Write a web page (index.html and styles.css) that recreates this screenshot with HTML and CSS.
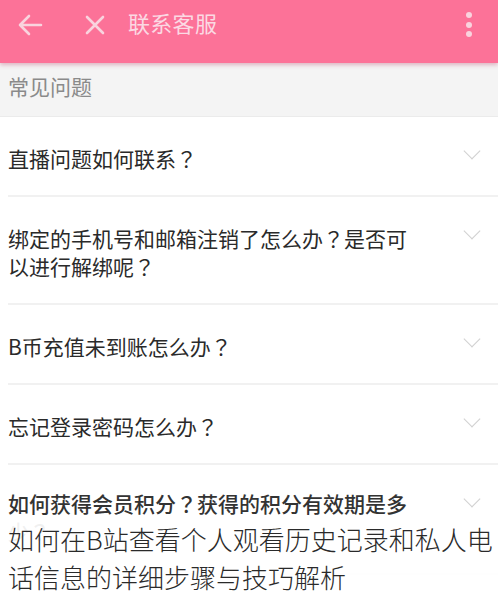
FILE: index.html
```html
<!DOCTYPE html>
<html lang="zh-CN">
<head>
<meta charset="utf-8">
<title>联系客服</title>
<link rel="stylesheet" href="styles.css">
</head>
<body>
<div class="page">
  <header class="topbar">
    <svg class="icon back" width="26" height="22" viewBox="0 0 26 22"><path d="M24 11H3M12 2L3 11l9 9" fill="none" stroke="#f9d3de" stroke-width="2.6" stroke-linecap="round" stroke-linejoin="round"/></svg>
    <svg class="icon close" width="20" height="20" viewBox="0 0 20 20"><path d="M2 2l16 16M18 2L2 18" fill="none" stroke="#f9d3de" stroke-width="2.6" stroke-linecap="round"/></svg>
    <span class="title">联系客服</span>
    <span class="more"><i></i><i></i><i></i></span>
  </header>
  <div class="section">常见问题</div>
  <ul class="faq">
    <li class="item"><span class="q">直播问题如何联系<span class="qm" lang="zh-TW">？</span></span><span class="chev"></span></li>
    <li class="item tall"><span class="q">绑定的手机号和邮箱注销了怎么办<span class="qm" lang="zh-TW">？</span>是否可以进行解绑呢<span class="qm" lang="zh-TW">？</span></span><span class="chev"></span></li>
    <li class="item"><span class="q">B币充值未到账怎么办<span class="qm" lang="zh-TW">？</span></span><span class="chev"></span></li>
    <li class="item"><span class="q">忘记登录密码怎么办<span class="qm" lang="zh-TW">？</span></span><span class="chev"></span></li>
    <li class="item last"><span class="q strong">如何获得会员积分<span class="qm" lang="zh-TW">？</span>获得的积分有效期是多少<span class="qm" lang="zh-TW">？</span></span><span class="chev"></span></li>
  </ul>
  <div class="caption">如何在B站查看个人观看历史记录和私人电<br>话信息的详细步骤与技巧解析</div>
</div>
</body>
</html>
```
FILE: styles.css
```css
html, body {
  margin: 0;
  padding: 0;
  background: #fff;
}
body {
  font-family: "Noto Sans CJK SC", "Noto Sans", sans-serif;
  color: #222;
}
.page {
  position: relative;
  width: 498px;
  height: 595px;
  overflow: hidden;
  background: #fff;
}
.topbar {
  position: relative;
  z-index: 2;
  height: 63px;
  background: #fc7298;
  box-shadow: 0 2px 4px rgba(180, 60, 100, 0.35);
  display: flex;
  align-items: center;
  padding-bottom: 14px;
  box-sizing: border-box;
}
.icon { display: block; flex: none; }
.back { margin-left: 17px; }
.close { margin-left: 42px; }
.title {
  margin-left: 23px;
  margin-bottom: 5px;
  font-size: 22px;
  color: #fbd9e3;
  line-height: 1;
  letter-spacing: 0.3px;
}
.more {
  margin-left: auto;
  margin-right: 26px;
  display: flex;
  flex-direction: column;
  gap: 3.5px;
}
.more i {
  display: block;
  width: 6px;
  height: 6px;
  border-radius: 50%;
  background: #f9d3de;
}
.section {
  height: 54px;
  background: #f4f4f4;
  color: #8a8a8a;
  font-size: 21px;
  line-height: 1;
  padding: 13px 0 0 8px;
  box-sizing: border-box;
  border-bottom: 1px solid #ebebeb;
}
.faq {
  list-style: none;
  margin: 0;
  padding: 0 0 0 8px;
}
.item {
  position: relative;
  height: 80px;
  border-bottom: 2px solid #f1f1f1;
  display: flex;
  align-items: center;
  padding-top: 4px;
  box-sizing: border-box;
}
.item.tall { height: 108px; }
.item.last { height: 110px; align-items: flex-start; padding-top: 24px; }
.q {
  width: 412px;
  font-size: 21px;
  line-height: 28px;
  color: #2a2a2a;
}
.qm { font-family: "Noto Sans CJK TC", "Noto Sans CJK JP", sans-serif; }
.q.strong { font-weight: 500; color: #333; }
.chev {
  position: absolute;
  right: 20px;
  top: 28px;
  width: 11px;
  height: 11px;
  border-right: 1.5px solid #d0d0d0;
  border-bottom: 1.5px solid #d0d0d0;
  transform: rotate(45deg);
}
.caption {
  position: absolute;
  left: 0;
  top: 520px;
  width: 498px;
  height: 75px;
  padding-left: 8px;
  box-sizing: border-box;
  background: rgba(255, 255, 255, 0.93);
  font-size: 26px;
  line-height: 38px;
  font-weight: 300;
  color: #2a2a2a;
  letter-spacing: 0;
  white-space: nowrap;
}
```
